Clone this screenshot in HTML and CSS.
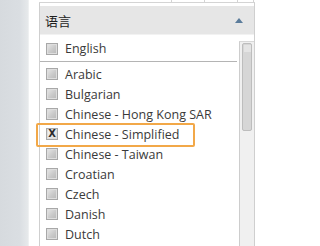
FILE: index.html
```html
<!DOCTYPE html>
<html>
<head>
<meta charset="utf-8">
<link rel="stylesheet" href="styles.css">
</head>
<body>
<div class="page">
  <div class="side"></div>
  <div class="main">
    <div class="toprule">
      <span class="cell c1"></span><span class="cell c2"></span><span class="cell c3"></span><span class="cell c4"></span>
    </div>
    <div class="panel">
      <div class="header">
        <span class="title">语言</span>
        <span class="arrow"></span>
      </div>
      <div class="body">
        <div class="list">
          <div class="row first"><span class="box"></span><span class="label">English</span></div>
          <div class="sep"></div>
          <div class="row"><span class="box"></span><span class="label">Arabic</span></div>
          <div class="row"><span class="box"></span><span class="label">Bulgarian</span></div>
          <div class="row"><span class="box"></span><span class="label">Chinese - Hong Kong SAR</span></div>
          <div class="row selected"><span class="box checked">X</span><span class="label">Chinese - Simplified</span></div>
          <div class="row"><span class="box"></span><span class="label">Chinese - Taiwan</span></div>
          <div class="row"><span class="box"></span><span class="label">Croatian</span></div>
          <div class="row"><span class="box"></span><span class="label">Czech</span></div>
          <div class="row"><span class="box"></span><span class="label">Danish</span></div>
          <div class="row"><span class="box"></span><span class="label">Dutch</span></div>
        </div>
        <div class="scroll"><div class="thumb"><span class="grip"></span></div></div>
      </div>
    </div>
  </div>
</div>
</body>
</html>
```

FILE: styles.css
```css
html, body {
  margin: 0;
  padding: 0;
  background: #ffffff;
  overflow: hidden;
}
.page {
  display: flex;
  width: 255px;
  height: 246px;
  font-family: "Open Sans", "Noto Sans CJK SC", sans-serif;
}
.side {
  width: 28px;
  height: 246px;
  background: linear-gradient(to right, #d6dade 0%, #dadee2 70%, #e6e9eb 100%);
  border-right: 1px solid #eef0f1;
  flex: none;
}
.main {
  margin-left: 9px;
  flex: 1;
  display: flex;
  flex-direction: column;
}
.toprule {
  display: flex;
  height: 2px;
  border-bottom: 1px solid #d4d4d4;
  margin-left: 1px;
}
.cell {
  height: 2px;
  border-right: 1px solid #d4d4d4;
  box-sizing: border-box;
}
.c1 { width: 133px; }
.c2 { width: 33px; }
.c3 { width: 33px; }
.c4 { width: 16px; }
.panel {
  margin-left: 1px;
  width: 216px;
  box-sizing: border-box;
  border-left: 1px solid #cfcfcf;
  border-right: 1px solid #cfcfcf;
  flex: 1;
  padding-top: 3px;
  display: flex;
  flex-direction: column;
}
.header {
  height: 28px;
  background: #e6e6e6;
  display: flex;
  align-items: center;
  justify-content: space-between;
  padding: 0 11px 0 5px;
  border-bottom: 1px solid #f2f2f2;
}
.title {
  font-family: "Noto Sans CJK SC", sans-serif;
  font-size: 13px;
  color: #1e1e1e;
}
.arrow {
  width: 0;
  height: 0;
  border-left: 4px solid transparent;
  border-right: 4px solid transparent;
  border-bottom: 5px solid #5b7c9b;
  margin-top: 1px;
}
.body {
  display: flex;
  flex: 1;
}
.list {
  width: 197px;
  flex: none;
}
.row {
  display: flex;
  align-items: center;
  height: 20px;
  padding-left: 6px;
  position: relative;
}
.row.first {
  height: 25px;
  margin-top: 1px;
}
.sep {
  height: 1px;
  background: #b4b4b4;
  margin-bottom: 2px;
}
.box {
  width: 12px;
  height: 12px;
  box-sizing: border-box;
  border: 1px solid #a8a8a8;
  background: linear-gradient(135deg, #e8e8e8 0%, #cacaca 55%, #b8b8b8 100%);
  box-shadow: inset 0 0 0 1px #dedede;
  flex: none;
  display: flex;
  align-items: center;
  justify-content: center;
}
.box.checked {
  background: linear-gradient(135deg, #f4f4f4 0%, #dcdcdc 100%);
  font-family: "DejaVu Sans", sans-serif;
  font-weight: bold;
  font-size: 10px;
  line-height: 1;
  color: #2c2c2c;
}
.label {
  margin-left: 7px;
  font-size: 12.5px;
  color: #3a3a3a;
  white-space: nowrap;
}
.row.selected::after {
  content: "";
  position: absolute;
  left: -4px;
  top: -1px;
  width: 159px;
  height: 24px;
  box-sizing: border-box;
  border: 2px solid #f2a848;
  border-radius: 2px;
}
.scroll {
  margin-left: 2px;
  margin-top: 6px;
  width: 16px;
  box-sizing: border-box;
  background: #f0f0f0;
  border-left: 1px solid #cdcdcd;
  border-top: 1px solid #d8d8d8;
  padding: 1px 2px 0 2px;
}
.thumb {
  height: 88px;
  box-sizing: border-box;
  background: #d6d6d6;
  border: 1px solid #bdbdbd;
  border-radius: 2px;
  display: flex;
  justify-content: center;
  padding-top: 1px;
}
.grip {
  width: 7px;
  height: 7px;
  background: #e4e4e4;
}
```
